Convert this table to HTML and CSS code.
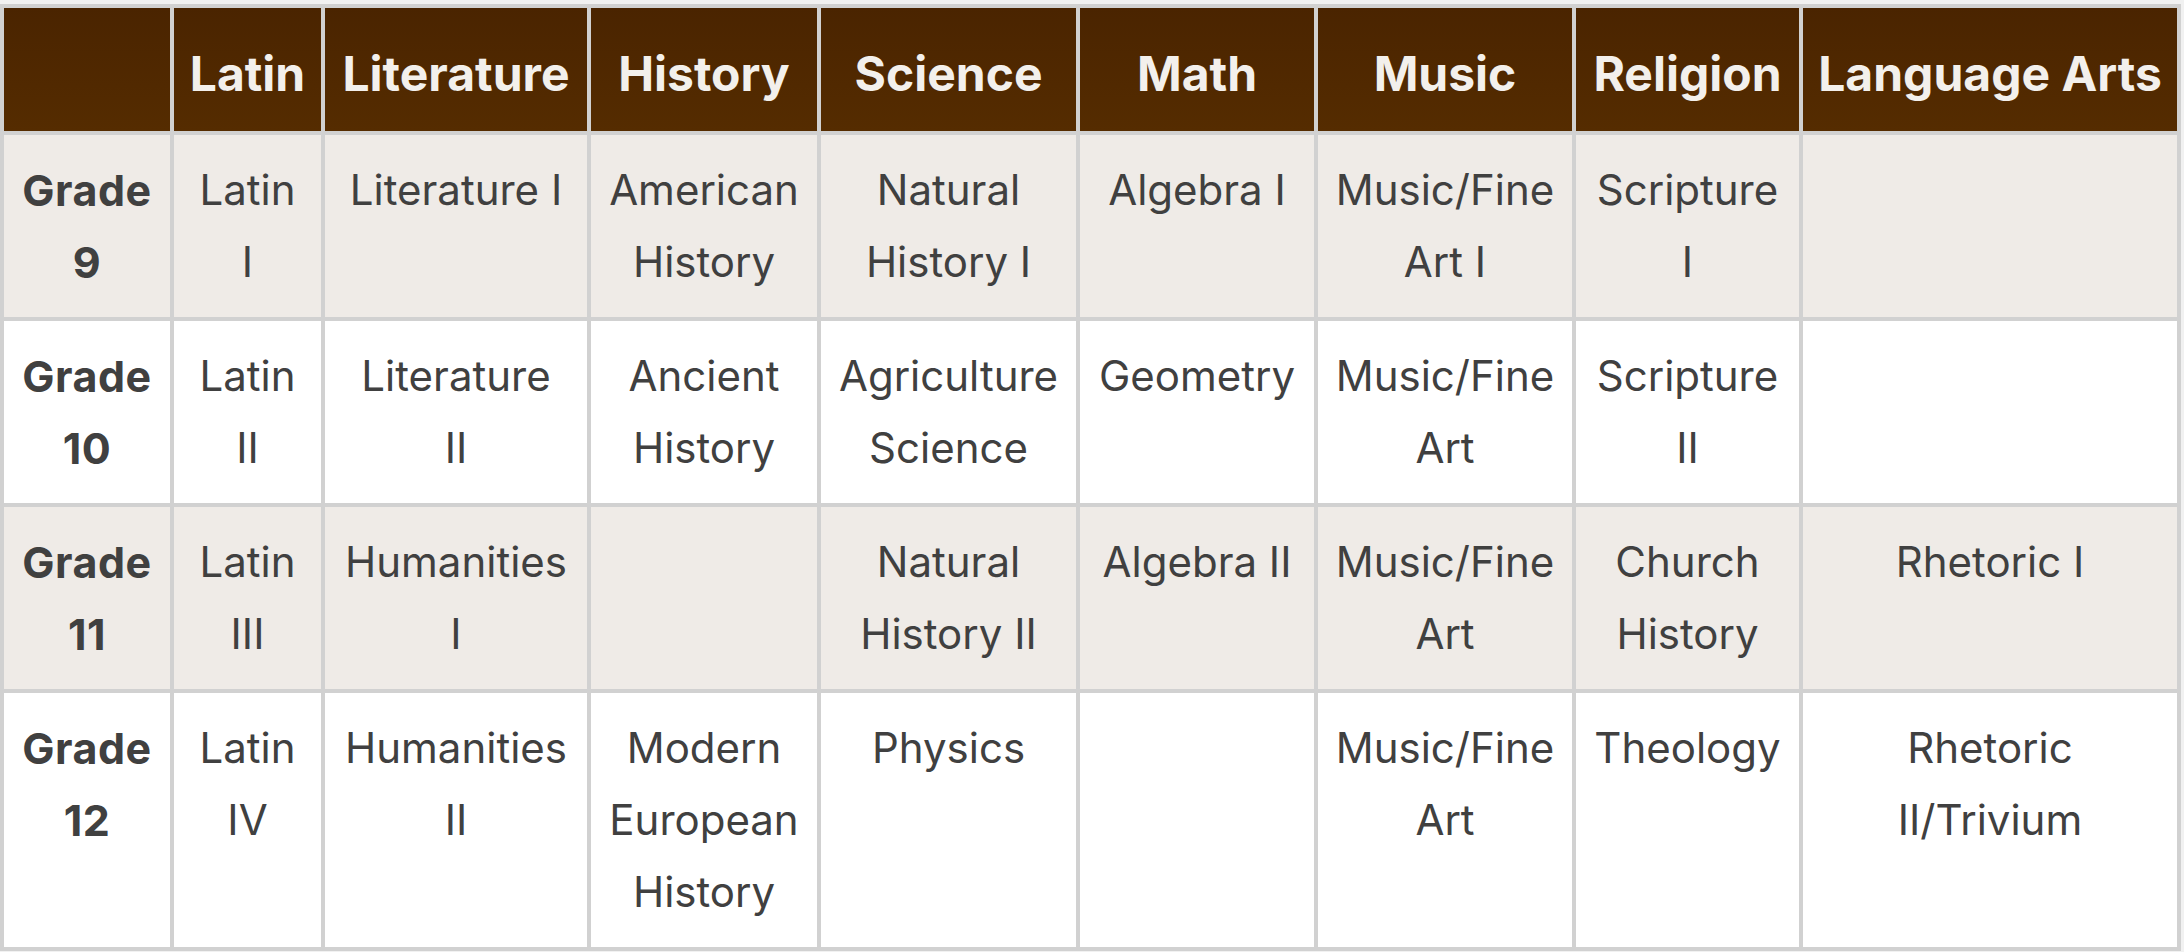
FILE: index.html
```html
<!DOCTYPE html>
<html lang="en">
<head>
<meta charset="utf-8">
<title>Curriculum</title>
<link rel="stylesheet" href="styles.css">
</head>
<body>
<div class="grid" role="table">
  <div class="cell head"></div>
  <div class="cell head">Latin</div>
  <div class="cell head">Literature</div>
  <div class="cell head">History</div>
  <div class="cell head">Science</div>
  <div class="cell head">Math</div>
  <div class="cell head">Music</div>
  <div class="cell head">Religion</div>
  <div class="cell head">Language Arts</div>

  <div class="cell alt grade">Grade<br>9</div>
  <div class="cell alt">Latin<br>I</div>
  <div class="cell alt">Literature I</div>
  <div class="cell alt">American<br>History</div>
  <div class="cell alt">Natural<br>History I</div>
  <div class="cell alt">Algebra I</div>
  <div class="cell alt">Music/Fine<br>Art I</div>
  <div class="cell alt">Scripture<br>I</div>
  <div class="cell alt"></div>

  <div class="cell grade">Grade<br>10</div>
  <div class="cell">Latin<br>II</div>
  <div class="cell">Literature<br>II</div>
  <div class="cell">Ancient<br>History</div>
  <div class="cell">Agriculture<br>Science</div>
  <div class="cell">Geometry</div>
  <div class="cell">Music/Fine<br>Art</div>
  <div class="cell">Scripture<br>II</div>
  <div class="cell"></div>

  <div class="cell alt grade">Grade<br>11</div>
  <div class="cell alt">Latin<br>III</div>
  <div class="cell alt">Humanities<br>I</div>
  <div class="cell alt"></div>
  <div class="cell alt">Natural<br>History II</div>
  <div class="cell alt">Algebra II</div>
  <div class="cell alt">Music/Fine<br>Art</div>
  <div class="cell alt">Church<br>History</div>
  <div class="cell alt">Rhetoric I</div>

  <div class="cell grade">Grade<br>12</div>
  <div class="cell">Latin<br>IV</div>
  <div class="cell">Humanities<br>II</div>
  <div class="cell">Modern<br>European<br>History</div>
  <div class="cell">Physics</div>
  <div class="cell"></div>
  <div class="cell">Music/Fine<br>Art</div>
  <div class="cell">Theology</div>
  <div class="cell">Rhetoric<br>II/Trivium</div>
</div>
</body>
</html>
```

FILE: styles.css
```css
html, body {
  margin: 0;
  padding: 0;
  background: #f1f1f1;
}

body {
  padding-top: 4px;
  font-family: Inter, "Noto Sans", sans-serif;
}

.grid {
  display: grid;
  grid-template-columns: 166px 147px 262px 226px 255px 234px 254px 223px 374px;
  gap: 4px;
  padding: 4px;
  width: max-content;
  background: #d1d1d1;
}

.cell {
  background: #ffffff;
  color: #404040;
  font-size: 42px;
  line-height: 72px;
  padding: 19px 0;
  text-align: center;
  white-space: nowrap;
}

.cell.alt {
  background: #efebe7;
}

.cell.grade {
  font-weight: 700;
  font-size: 43px;
  letter-spacing: 0.5px;
}

.cell.head {
  background: linear-gradient(#4a2400, #552c00);
  color: #f3f0ec;
  font-weight: 700;
  font-size: 48px;
  padding: 30px 0 21px;
}
```
